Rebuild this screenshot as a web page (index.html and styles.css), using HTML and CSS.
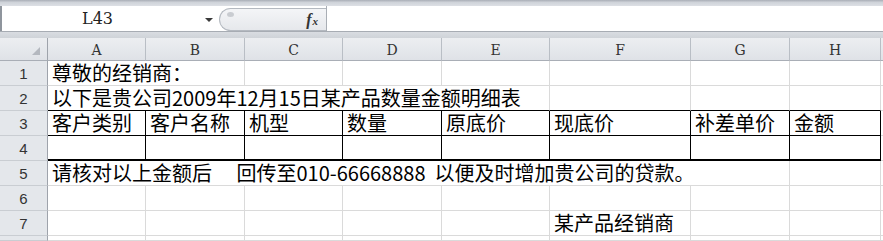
FILE: index.html
```html
<!DOCTYPE html>
<html lang="zh-CN">
<head>
    <meta charset="UTF-8">
    <title>经销商金额明细表</title>
    <link rel="stylesheet" href="styles.css">
</head>
<body>
    <div class="top-band"></div>
    <div class="formula-bar">
        <div class="name-box">
            <span class="name">L43</span>
            <span class="arrow"></span>
        </div>
        <div class="fx-area">
            <span class="grip"></span>
            <span class="fx"><i>f</i><i class="sub">x</i></span>
        </div>
        <div class="formula-input"></div>
    </div>
    <div class="bar-gap"></div>

    <div class="sheet">
        <div class="corner"><span class="corner-mark"></span></div>
        <div class="col-head">A</div>
        <div class="col-head">B</div>
        <div class="col-head">C</div>
        <div class="col-head">D</div>
        <div class="col-head">E</div>
        <div class="col-head">F</div>
        <div class="col-head">G</div>
        <div class="col-head">H</div>
        <div class="col-head rest"></div>

        <!-- row 1 -->
        <div class="row-head">1</div>
        <div class="cell span-2">尊敬的经销商：</div>
        <div class="cell"></div><div class="cell"></div><div class="cell"></div>
        <div class="cell"></div><div class="cell"></div><div class="cell"></div>
        <div class="cell rest"></div>

        <!-- row 2 -->
        <div class="row-head">2</div>
        <div class="cell span-5 table-top">以下是贵公司2009年12月15日某产品数量金额明细表</div>
        <div class="cell table-top"></div><div class="cell table-top"></div><div class="cell table-top"></div>
        <div class="cell rest"></div>

        <!-- row 3 -->
        <div class="row-head">3</div>
        <div class="cell boxed">客户类别</div>
        <div class="cell boxed">客户名称</div>
        <div class="cell boxed">机型</div>
        <div class="cell boxed">数量</div>
        <div class="cell boxed">原底价</div>
        <div class="cell boxed">现底价</div>
        <div class="cell boxed">补差单价</div>
        <div class="cell boxed">金额</div>
        <div class="cell rest"></div>

        <!-- row 4 -->
        <div class="row-head">4</div>
        <div class="cell boxed last"></div><div class="cell boxed last"></div>
        <div class="cell boxed last"></div><div class="cell boxed last"></div>
        <div class="cell boxed last"></div><div class="cell boxed last"></div>
        <div class="cell boxed last"></div><div class="cell boxed last"></div>
        <div class="cell rest"></div>

        <!-- row 5 -->
        <div class="row-head">5</div>
        <div class="cell span-7">请核对以上金额后　 回传至010-66668888  以便及时增加贵公司的贷款。</div>
        <div class="cell"></div>
        <div class="cell rest"></div>

        <!-- row 6 -->
        <div class="row-head">6</div>
        <div class="cell"></div><div class="cell"></div><div class="cell"></div><div class="cell"></div>
        <div class="cell"></div><div class="cell"></div><div class="cell"></div><div class="cell"></div>
        <div class="cell rest"></div>

        <!-- row 7 -->
        <div class="row-head">7</div>
        <div class="cell"></div><div class="cell"></div><div class="cell"></div><div class="cell"></div>
        <div class="cell"></div>
        <div class="cell">某产品经销商</div>
        <div class="cell"></div><div class="cell"></div>
        <div class="cell rest"></div>

        <!-- row 8 -->
        <div class="row-head"></div>
        <div class="cell"></div><div class="cell"></div><div class="cell"></div><div class="cell"></div>
        <div class="cell"></div><div class="cell"></div><div class="cell"></div><div class="cell"></div>
        <div class="cell rest"></div>
    </div>
</body>
</html>
```

FILE: styles.css
```css
body {
    margin: 0;
    width: 883px;
    height: 241px;
    overflow: hidden;
    background: #ffffff;
    font-family: "Noto Sans CJK SC", sans-serif;
}

.top-band {
    height: 6px;
    background: linear-gradient(#a9aeb6, #cfd3d9 40%, #dde0e5);
}

.formula-bar {
    display: flex;
    height: 25px;
    background: #ffffff;
    border-left: 2px solid #8f959d;
}

.name-box {
    width: 217px;
    display: flex;
    align-items: center;
    position: relative;
}

.name {
    margin-left: 80px;
    font-family: "DejaVu Serif", serif;
    font-size: 16px;
    color: #222222;
}

.arrow {
    position: absolute;
    left: 203px;
    top: 12px;
    width: 0;
    height: 0;
    border-left: 4px solid transparent;
    border-right: 4px solid transparent;
    border-top: 4px solid #3a3a3a;
}

.fx-area {
    width: 106px;
    margin-top: 2px;
    border: 1px solid #b4b9c0;
    border-right: none;
    border-radius: 13px 0 0 13px;
    background: linear-gradient(#f4f5f7, #e6e8ec);
    display: flex;
    align-items: center;
    position: relative;
}

.grip {
    position: absolute;
    left: 7px;
    top: 3px;
    width: 7px;
    height: 5px;
    border-radius: 50%;
    background: #c9ccd1;
}

.fx {
    margin-left: auto;
    margin-right: 8px;
    font-family: "Liberation Serif", serif;
    font-weight: bold;
    font-size: 16px;
    color: #333333;
}

.fx .sub {
    font-size: 11px;
    margin-left: 1px;
}

.formula-input {
    flex: 1;
    border-left: 1px solid #a9aeb5;
    background: #ffffff;
}

.bar-gap {
    height: 7px;
    border-top: 1px solid #a7acb3;
    box-sizing: border-box;
    background: linear-gradient(#d9dce1, #cfd3d8);
}

.sheet {
    display: grid;
    grid-template-columns: 48px 98px 99px 98px 99px 108px 141px 99px 91px 1fr;
    grid-template-rows: 23px repeat(7, 25px) 1fr;
    height: 203px;
}

.corner,
.col-head,
.row-head {
    box-sizing: border-box;
    background: linear-gradient(#eceef1, #dfe2e7);
    border-right: 1px solid #b9bec5;
    border-bottom: 1px solid #a9aeb6;
    color: #333333;
    display: flex;
    align-items: center;
    justify-content: center;
}

.corner {
    position: relative;
    border-right-color: #9ea3ab;
}

.corner-mark {
    position: absolute;
    right: 7px;
    bottom: 5px;
    width: 0;
    height: 0;
    border-left: 8px solid transparent;
    border-bottom: 8px solid #b4b8bf;
}

.col-head {
    font-family: "DejaVu Serif", serif;
    font-size: 14px;
    padding-top: 2px;
}

.row-head {
    font-family: "Liberation Sans", sans-serif;
    font-size: 15px;
    background: #e4e7eb;
    border-right-color: #9ea3ab;
    border-bottom-color: #c9cdd2;
}

.cell {
    box-sizing: border-box;
    border-right: 1px solid #dadada;
    border-bottom: 1px solid #dadada;
    padding-left: 4px;
    font-size: 20px;
    line-height: 24px;
    color: #000000;
    white-space: pre;
}

.rest {
    border-right: none;
}

.span-2 { grid-column: span 2; }
.span-5 { grid-column: span 5; }
.span-7 { grid-column: span 7; }

.table-top {
    border-bottom-color: #000000;
}

.boxed {
    border-right-color: #000000;
    border-bottom-color: #000000;
}

.boxed.last {
    border-bottom-width: 2px;
}
```
